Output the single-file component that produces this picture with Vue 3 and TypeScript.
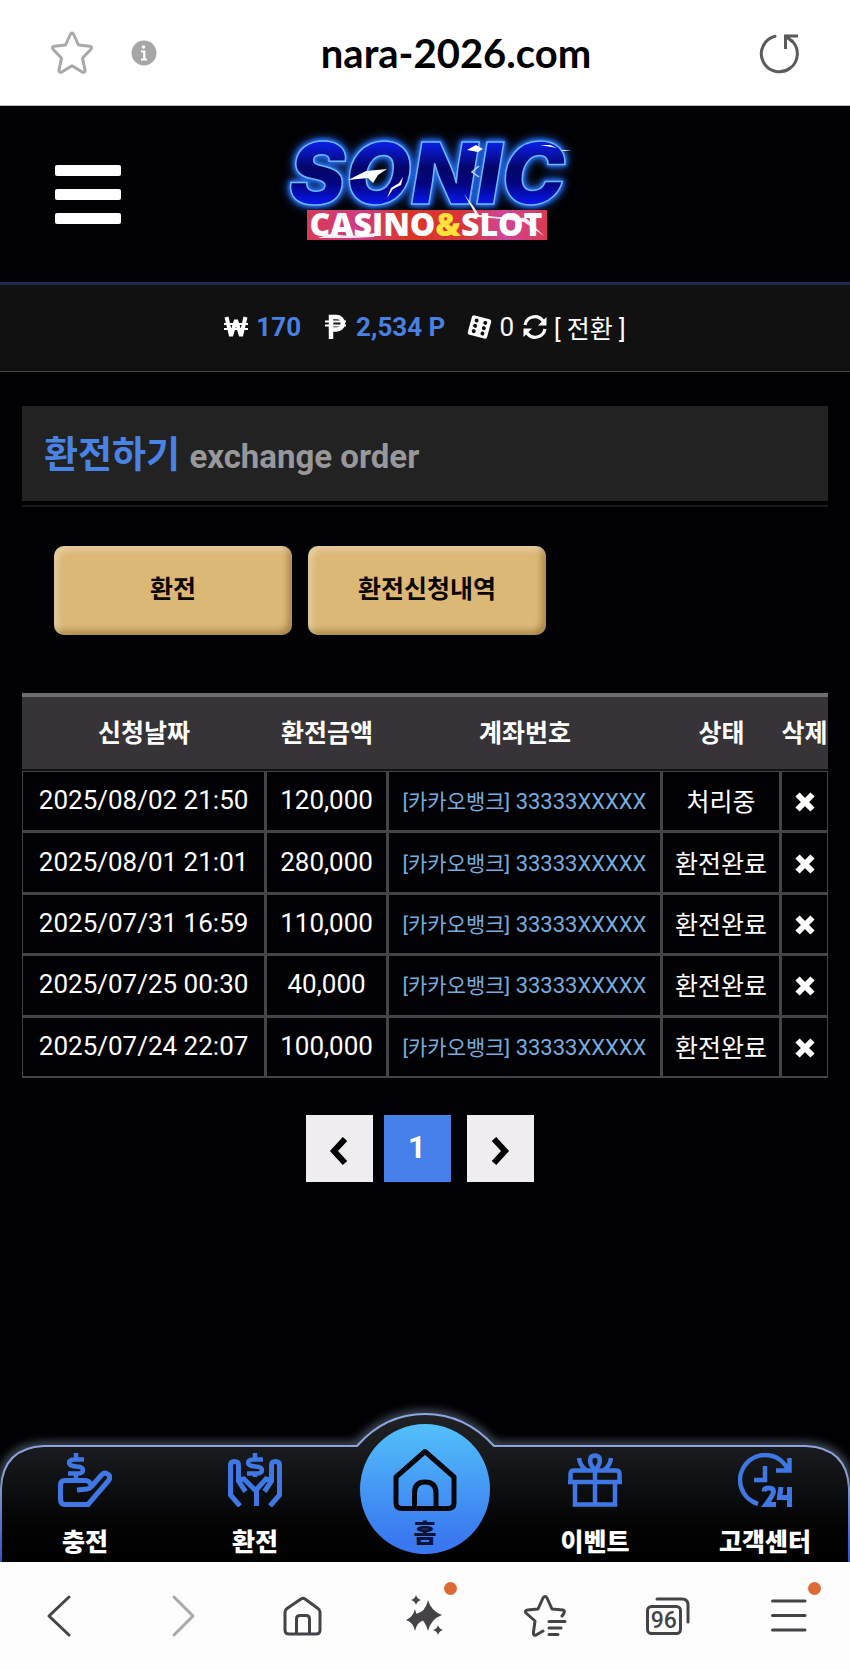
<script setup lang="ts">
interface ExchangeRow {
  date: string
  amount: string
  bank: string
  account: string
  status: string
}

const rows: ExchangeRow[] = [
  { date: '2025/08/02 21:50', amount: '120,000', bank: '[카카오뱅크]', account: '33333XXXXX', status: '처리중' },
  { date: '2025/08/01 21:01', amount: '280,000', bank: '[카카오뱅크]', account: '33333XXXXX', status: '환전완료' },
  { date: '2025/07/31 16:59', amount: '110,000', bank: '[카카오뱅크]', account: '33333XXXXX', status: '환전완료' },
  { date: '2025/07/25 00:30', amount: '40,000', bank: '[카카오뱅크]', account: '33333XXXXX', status: '환전완료' },
  { date: '2025/07/24 22:07', amount: '100,000', bank: '[카카오뱅크]', account: '33333XXXXX', status: '환전완료' },
]
</script>

<template>
  <div class="screen">
    <div class="address-bar">
      <div class="address-side">
        <button type="button" class="plain" aria-label="즐겨찾기">
          <svg width="44" height="44" viewBox="0 0 44 44" fill="none" stroke="#a9a9a9" stroke-width="3" stroke-linejoin="round">
            <path d="M20.300 3.500Q22 .500 23.700 3.500L28.500 14L39.800 15.300Q42.800 16 40.600 18.600L32.500 27L35 39Q35.200 42.200 32.200 41L22 34.800L11.800 41Q8.800 42.200 9 39L11.500 27L3.400 18.600Q1.200 16 4.200 15.300L15.500 14Z" />
          </svg>
        </button>
        <button type="button" class="plain" aria-label="사이트 정보">
          <svg width="26" height="26" viewBox="0 0 26 26">
            <circle cx="13" cy="13" r="12.500" fill="#a6a6a6" />
            <circle cx="12.500" cy="7" r="1.800" fill="#fff" />
            <path d="M10 11.500H13.300V19M10 19.500H16" fill="none" stroke="#fff" stroke-width="2.200" />
          </svg>
        </button>
      </div>
      <div class="url">nara-2026.com</div>
      <button type="button" class="plain reload" aria-label="새로고침">
        <svg width="42" height="42" viewBox="0 0 42 42" fill="none" stroke="#5b5b5d" stroke-width="3">
          <path d="M17 4.300A18 18 0 1 0 33.500 8.500" stroke-linecap="round" />
          <path d="M27.500 17V4H40M28 4.500L35 10" />
        </svg>
      </button>
    </div>

    <header class="site-header">
      <button type="button" class="plain menu" aria-label="메뉴">
        <span></span><span></span><span></span>
      </button>
      <a href="#" class="logo" aria-label="SONIC CASINO&SLOT">
        <svg width="320" height="130" viewBox="0 0 320 130">
          <defs>
            <linearGradient id="sonicFill" x1="0" y1="0" x2="0" y2="1">
              <stop offset=".2" stop-color="#0a1ee6" />
              <stop offset=".45" stop-color="#040568" />
              <stop offset=".6" stop-color="#040580" />
              <stop offset=".8" stop-color="#0718f0" />
            </linearGradient>
            <linearGradient id="bannerFill" x1="0" y1="0" x2="1" y2="0">
              <stop offset="0" stop-color="#d83a52" />
              <stop offset=".22" stop-color="#d03c86" />
              <stop offset=".42" stop-color="#dc3524" />
              <stop offset=".66" stop-color="#d8353a" />
              <stop offset=".82" stop-color="#d0459a" />
              <stop offset="1" stop-color="#dc3a52" />
            </linearGradient>
          </defs>
          <text class="sonic" x="157" y="75" text-anchor="middle" fill="url(#sonicFill)" stroke="#6fb8ff" stroke-width="1.500">SONIC</text>
          <path d="M78 51L96 42L117 40L108 46L103 54L98 49Z M117 69L121 59L129 54L133 48L131 56L123 60Z M197 21L206 16L213 20L208 23Z M270 16L280 16L287 19Z M294 21L302 22L290 22Z" fill="#fff" />
          <path d="M209 37L202 43L209 48" fill="none" stroke="#bcd8ff" stroke-width="1.500" />
          <rect x="37" y="81" width="240" height="30" fill="url(#bannerFill)" />
          <text class="casino" x="156" y="107" text-anchor="middle" fill="#fff">CASINO<tspan fill="#ffe23a">&amp;</tspan>SLOT</text>
          <path d="M194 65L204 78L209 86L228 88L256 89L274 107L254 93L232 90L207 88Z M48 109L60 105L80 107L106 104L104 108L82 109Z" fill="#fff" opacity=".9" />
        </svg>
      </a>
    </header>

    <div class="wallet">
      <svg width="24" height="24" viewBox="0 0 24 24" fill="none" stroke="#fff" stroke-width="4">
        <path d="M2.500 2L7 21L12 5L17 21L21.500 2" stroke-linejoin="bevel" />
        <path d="M0 9H24M0 14H24" stroke-width="2" />
      </svg>
      <strong class="won">170</strong>
      <svg width="22" height="26" viewBox="0 0 22 26" fill="none" stroke="#fff" stroke-width="4.500">
        <path d="M6 25V3H11.500A5.500 5.500 0 0 1 11.500 15.500H6" />
        <path d="M0 7.500H21M0 11.500H21" stroke-width="2.200" />
      </svg>
      <strong class="point">2,534 P</strong>
      <svg class="dice" width="25" height="26" viewBox="0 0 25 26">
        <g transform="rotate(15 12.500 13)">
          <rect x="2.500" y="3" width="20" height="20" rx="2.500" fill="#fff" />
          <g fill="#111">
            <circle cx="8" cy="7.500" r="2" /><circle cx="8" cy="13" r="2" /><circle cx="8" cy="18.500" r="2" />
            <circle cx="17" cy="7.500" r="2" /><circle cx="17" cy="13" r="2" /><circle cx="17" cy="18.500" r="2" />
          </g>
        </g>
      </svg>
      <span>0</span>
      <svg width="26" height="26" viewBox="0 0 26 26">
        <path d="M3 11A10 10 0 0 1 21 7M23 15A10 10 0 0 1 5 19" fill="none" stroke="#fff" stroke-width="3.200" />
        <path d="M24.500 3V11.500H16ZM1.500 23V14.500H10Z" fill="#fff" />
      </svg>
      <a href="#" class="switch">[ 전환 ]</a>
    </div>

    <main class="content">
      <h1 class="title"><span>환전하기</span> <small>exchange order</small></h1>

      <div class="tabs">
        <button type="button">환전</button>
        <button type="button">환전신청내역</button>
      </div>

      <table class="orders">
        <colgroup>
          <col class="c-date"><col class="c-amount"><col class="c-account"><col class="c-status"><col class="c-delete">
        </colgroup>
        <thead>
          <tr>
            <th scope="col">신청날짜</th>
            <th scope="col">환전금액</th>
            <th scope="col">계좌번호</th>
            <th scope="col">상태</th>
            <th scope="col">삭제</th>
          </tr>
        </thead>
        <tbody>
          <tr v-for="row in rows" :key="row.date">
            <td>{{ row.date }}</td>
            <td>{{ row.amount }}</td>
            <td class="account"><span class="bank">{{ row.bank }}</span> {{ row.account }}</td>
            <td class="status">{{ row.status }}</td>
            <td>
              <button type="button" class="plain remove" aria-label="삭제">
                <svg width="20" height="20" viewBox="0 0 20 20" stroke="#fff" stroke-width="6">
                  <path d="M2.500 2.500L17.500 17.500M17.500 2.500L2.500 17.500" />
                </svg>
              </button>
            </td>
          </tr>
        </tbody>
      </table>

      <nav class="pager" aria-label="페이지">
        <button type="button" aria-label="이전">
          <svg width="20" height="28" viewBox="0 0 20 28" fill="none" stroke="#000" stroke-width="6"><path d="M16 2L5 14L16 26" /></svg>
        </button>
        <button type="button" class="current" aria-current="page">1</button>
        <button type="button" class="next" aria-label="다음">
          <svg width="20" height="28" viewBox="0 0 20 28" fill="none" stroke="#000" stroke-width="6"><path d="M4 2L15 14L4 26" /></svg>
        </button>
      </nav>
    </main>

    <nav class="dock" aria-label="주요 메뉴">
      <svg class="dock-shape" viewBox="0 0 850 162" preserveAspectRatio="none">
        <defs>
          <linearGradient id="dockFill" x1="0" y1="0" x2="0" y2="1">
            <stop offset="0" stop-color="#202226" />
            <stop offset=".3" stop-color="#16181b" />
            <stop offset=".75" stop-color="#030304" />
            <stop offset="1" stop-color="#000" />
          </linearGradient>
          <linearGradient id="dockLine" x1="0" y1="0" x2="0" y2="1">
            <stop offset="0" stop-color="#8da8e8" />
            <stop offset=".4" stop-color="#8d9fd0" />
            <stop offset="1" stop-color="#2c55c8" />
          </linearGradient>
          <filter id="dockGlow" x="-5%" y="-20%" width="110%" height="140%">
            <feGaussianBlur stdDeviation="5" />
          </filter>
        </defs>
        <path d="M1 162V88Q3 48 44 46H357Q385 14 425 14Q465 14 494 46H806Q847 48 849 88V162" fill="none" stroke="#8aa0bd" stroke-width="6" opacity=".7" filter="url(#dockGlow)" />
        <path d="M1 163V88Q3 48 44 46H357Q385 14 425 14Q465 14 494 46H806Q847 48 849 88V163Z" fill="url(#dockFill)" stroke="url(#dockLine)" stroke-width="2" />
      </svg>
      <a href="#">
        <svg width="54" height="54" viewBox="0 0 54 54" fill="none" stroke="#3f78e4" stroke-width="5">
          <path d="M26 6.500H17Q11 6.500 11 10Q11 13 18.500 13.500Q25 14 25 17Q25 20.500 19 20.500H10M18 0V7M18 20V26" stroke-width="4.500" />
          <path d="M19 37L29 36Q35 35 32 30Q30.500 27.500 27 27.500H7Q2.500 27.500 2.500 32V46Q2.500 51.500 7 51.500H30L51 27Q53 23 49.500 21Q46 19 43.500 22L33 34" stroke-linejoin="round" />
        </svg>
        <span>충전</span>
      </a>
      <a href="#">
        <svg width="54" height="54" viewBox="0 0 54 54" fill="none" stroke="#3f78e4" stroke-width="5">
          <path d="M35 6.500H26Q20 6.500 20 10Q20 13 27.500 13.500Q34 14 34 17Q34 20.500 28 20.500H19M27 0V7M27 20V24" stroke-width="4.500" />
          <path d="M12 53L2.500 42V12Q2.500 8.500 6.500 8.500Q10.500 8.500 10.500 12V28L17.500 38.500M10.500 27L16 26L28.500 38.500V53M42 53L51.500 42V12Q51.500 8.500 47.500 8.500Q43.500 8.500 43.500 12V28L36.500 38.500M43.500 27L38 26L28.500 36.500" />
        </svg>
        <span>환전</span>
      </a>
      <a href="#" class="home">
        <svg width="64" height="64" viewBox="0 0 64 64" fill="none" stroke="#05070d" stroke-width="5" stroke-linejoin="round">
          <path d="M32 3.500L61 29V55Q61 60.500 55 60.500H9Q3 60.500 3 55V29Z" />
          <path d="M21.500 60V45Q21.500 34 32 34Q43 34 43 45V60" />
        </svg>
        <span>홈</span>
      </a>
      <a href="#">
        <svg width="54" height="54" viewBox="0 0 54 54" fill="none" stroke="#3f78e4" stroke-width="4.500">
          <path d="M2.500 29V21Q2.500 17.500 6 17.500H48Q51.500 17.500 51.500 21V29M0 29H54M7 30V51.500H47V30M27 17V51" />
          <path d="M27 17C20 10 21 2.500 27 2.500S34 10 27 17M11 5Q12 13 18 17M43 5Q42 13 36 17" />
        </svg>
        <span>이벤트</span>
      </a>
      <a href="#">
        <svg width="54" height="54" viewBox="0 0 54 54" fill="none" stroke="#3f78e4" stroke-width="4.500">
          <path d="M20 51A25 25 0 1 1 50 17" />
          <path d="M51.500 5V17.500H38M27 13V27H16" />
          <path d="M26 38.500Q26 35 31 35Q35.500 35 35.500 38.500Q35.500 41.500 28 51.500H38M43 34L41.500 44.500H52M51.500 34V54" stroke-width="5" />
        </svg>
        <span>고객센터</span>
      </a>
    </nav>

    <nav class="browser-bar" aria-label="브라우저">
      <button type="button" aria-label="뒤로">
        <svg width="44" height="44" viewBox="0 0 44 44"><path d="M30 3L10 22L30 41" /></svg>
      </button>
      <button type="button" class="dim" aria-label="앞으로">
        <svg width="44" height="44" viewBox="0 0 44 44"><path d="M14 3L33 22L14 41" /></svg>
      </button>
      <button type="button" aria-label="홈페이지">
        <svg width="44" height="44" viewBox="0 0 44 44"><path d="M19 5Q21 3.500 23 5L36 14.500Q38 16 38 18V36Q38 40 34 40H7Q3 40 3 36V18Q3 16 5 14.500ZM14.500 40V25Q14.500 21.500 18 21.500H24Q27.500 21.500 27.500 25V40" /></svg>
      </button>
      <button type="button" class="notice" aria-label="AI 도우미">
        <svg width="44" height="44" viewBox="0 0 44 44" class="solid"><path d="M25 6Q28 17 39 21Q28 25 25 37Q23 27 14 22L13 20Q22.500 18 25 6ZM12 15Q13 23 21 26Q14 28 12 37Q10 28 3 26Q10 23 12 15ZM13 1Q14 5 18 6Q14 7 13 11Q12 7 8 6Q12 5 13 1ZM35 31Q36 35 40 36Q36 37 35 41Q34 37 30 36Q34 35 35 31Z" /></svg>
      </button>
      <button type="button" aria-label="북마크">
        <svg width="44" height="44" viewBox="0 0 44 44"><path d="M19 37L12 41Q9 42 9.500 38L11 27L2 19Q.500 16.500 3.500 16L14 15L19 4Q21 1 23 4L28 15L39 16Q41.500 17 39.500 20L38 22M25 27.500H41M25 34H37M25 40.500H34" /></svg>
      </button>
      <button type="button" aria-label="탭 96개">
        <span class="tab-icon">
          <svg width="44" height="44" viewBox="0 0 44 44"><path d="M11 5H36Q42 5 42 11V28" /><rect x="1.500" y="12.500" width="33" height="27" rx="4" /></svg>
          <span class="tab-count">96</span>
        </span>
      </button>
      <button type="button" class="notice" aria-label="도구">
        <svg width="44" height="44" viewBox="0 0 44 44"><path d="M5.500 7H38M5.500 21.500H38M5.500 36H38" /></svg>
      </button>
    </nav>
  </div>
</template>

<style>
body {
  margin: 0;
  background: #010103;
}
</style>

<style scoped>
.screen {
  display: flex;
  flex-direction: column;
  min-height: 100vh;
  background: #010103;
  color: #fff;
  font-family: Roboto, "Noto Sans CJK KR", sans-serif;
  font-size: 26px;
}
.screen * {
  box-sizing: border-box;
}
svg {
  display: block;
  flex: none;
}
button {
  font-family: inherit;
  font-size: inherit;
  cursor: pointer;
}
a {
  color: inherit;
  text-decoration: none;
}
.plain {
  padding: 0;
  border: 0;
  background: none;
}
.address-bar {
  display: grid;
  grid-template-columns: 1fr auto 1fr;
  align-items: center;
  height: 106px;
  padding: 0 50px;
  background: #fff;
  border-bottom: 1px solid #bbb;
}
.address-side {
  display: flex;
  align-items: center;
  gap: 37px;
}
.url {
  padding-left: 62px;
  color: #000;
  font-family: Lato, sans-serif;
  font-weight: 700;
  font-size: 40px;
  line-height: 48px;
}
.reload {
  justify-self: end;
}
.site-header {
  display: grid;
  grid-template-columns: 1fr auto 1fr;
  align-items: center;
  height: 179px;
  padding: 0 55px;
  border-bottom: 3px solid #20264f;
}
.menu {
  display: flex;
  flex-direction: column;
  gap: 13px;
  width: 66px;
}
.menu span {
  height: 11px;
  border-radius: 2px;
  background: #fff;
}
.logo {
  padding-left: 10px;
}
.logo svg {
  overflow: visible;
}
.sonic {
  font-family: Inter, sans-serif;
  font-style: italic;
  font-weight: 900;
  font-size: 85px;
  filter: drop-shadow(0 0 2px #2a74ff) drop-shadow(0 0 2px #1f62e6) drop-shadow(0 0 5px #1c4fb0);
}
.casino {
  font-family: "Open Sans", sans-serif;
  font-weight: 800;
  font-size: 32px;
}
.wallet {
  display: flex;
  align-items: center;
  justify-content: center;
  height: 87px;
  padding-bottom: 3px;
  border-bottom: 1px solid #444;
  background: #111112;
}
.wallet strong {
  color: #4a80e0;
}
.won {
  margin: 0 24px 0 8px;
}
.point {
  margin: 0 22px 0 9px;
}
.dice {
  margin-right: 7px;
}
.wallet span {
  margin-right: 8px;
}
.switch {
  margin-left: 6px;
  font-size: 25px;
}
.content {
  padding: 34px 22px 0;
}
.title {
  position: relative;
  margin: 0;
  padding: 4px 22px 0;
  height: 95px;
  background: #222223;
  color: #4a83e6;
  font-size: 37px;
  line-height: 91px;
  font-weight: 700;
}
.title::after {
  content: "";
  position: absolute;
  left: 0;
  right: 0;
  bottom: -6px;
  height: 2px;
  background: #19191a;
}
.title small {
  color: #98989a;
  font-size: 33px;
  font-weight: 700;
}
.tabs {
  display: flex;
  gap: 16px;
  padding: 45px 32px 58px;
}
.tabs button {
  width: 238px;
  height: 89px;
  padding: 0 0 7px;
  border: 0;
  border-radius: 10px;
  background: #dcb877;
  box-shadow: inset 4px 4px 6px rgba(255, 255, 255, .3), inset -4px -4px 6px rgba(90, 60, 0, .4);
  color: #0a0603;
  font-size: 25px;
  font-weight: 700;
}
.orders {
  width: 100%;
  height: 385px;
  table-layout: fixed;
  border-spacing: 0;
  text-align: center;
  white-space: nowrap;
}
.c-date { width: 30.3%; }
.c-amount { width: 15.1%; }
.c-account { width: 34%; }
.c-status { width: 14.8%; }
.c-delete { width: 5.8%; }
.orders th {
  height: 78px;
  padding: 0 0 4px;
  border-top: 4px solid #6f6d70;
  border-bottom: 2px solid #111;
  background: #363437;
  font-size: 25px;
  font-weight: 700;
}
.orders td {
  padding: 0 0 2px;
  border: 1px solid #454347;
  border-width: 1px 2px 2px 1px;
}
.orders td:last-child {
  border-right-width: 1px;
}
.orders .account {
  padding: 0 0 2px;
  color: #78acde;
  font-size: 22px;
}
.bank {
  font-size: 21px;
}
.orders .status {
  font-size: 25px;
}
.remove {
  display: block;
  margin: 4px auto 0;
}
.pager {
  display: flex;
  justify-content: center;
  gap: 11px;
  padding: 37px 11px 40px 0;
}
.pager button {
  display: flex;
  align-items: center;
  justify-content: center;
  width: 67px;
  height: 67px;
  padding: 5px 0 0;
  border: 0;
  background: #efedf0;
}
.pager .current {
  padding: 0 0 2px;
  background: #4580ea;
  color: #fff;
  font-size: 31px;
  font-weight: 700;
}
.pager .next {
  margin-left: 5px;
}
.dock {
  position: relative;
  display: grid;
  grid-template-columns: repeat(5, 1fr);
  align-items: end;
  justify-items: center;
  height: 162px;
  margin-top: auto;
}
.dock-shape {
  position: absolute;
  inset: 0;
  width: 100%;
  height: 100%;
  overflow: hidden;
}
.dock a {
  position: relative;
  display: flex;
  flex-direction: column;
  align-items: center;
  gap: 18px;
  padding-bottom: 1px;
  font-size: 25px;
  line-height: 36px;
  font-weight: 900;
}
.dock .home {
  gap: 4px;
  width: 130px;
  height: 130px;
  margin-bottom: 8px;
  padding-top: 24px;
  border-radius: 50%;
  background: linear-gradient(#52c0fa, #3a78f0 90%);
  color: #0b1338;
}
.browser-bar {
  display: grid;
  grid-template-columns: repeat(7, 1fr);
  height: 107px;
  background: #fdfdfe;
}
.browser-bar button {
  position: relative;
  display: flex;
  align-items: center;
  justify-content: center;
  padding: 0;
  border: 0;
  background: none;
}
.browser-bar svg {
  fill: none;
  stroke: #454347;
  stroke-width: 3;
  stroke-linecap: round;
  stroke-linejoin: round;
}
.browser-bar .dim svg {
  stroke: #a9a8ab;
}
.browser-bar .solid {
  fill: #454347;
  stroke: none;
}
.notice::after {
  content: "";
  position: absolute;
  top: 20px;
  left: calc(50% + 19px);
  width: 13px;
  height: 13px;
  border-radius: 50%;
  background: #dc6a35;
}
.tab-icon {
  position: relative;
}
.tab-count {
  position: absolute;
  left: 0;
  top: 13px;
  width: 36px;
  color: #454347;
  font-size: 23px;
  line-height: 27px;
  font-weight: 500;
  text-align: center;
}
</style>
